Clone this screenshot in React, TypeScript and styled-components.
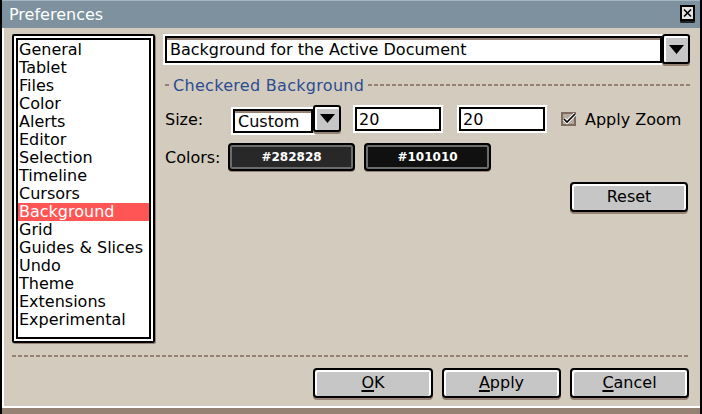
import React from 'react'
import styled, { createGlobalStyle, css } from 'styled-components'

const GlobalStyle = createGlobalStyle`
  html, body {
    margin: 0;
    padding: 0;
    background: #000;
  }
  body {
    font-family: 'DejaVu Sans', 'Liberation Sans', sans-serif;
    font-size: 16px;
    color: #000;
  }
`

const face = '#d3cbbe'
const shade = '#968275'

const Window = styled.div`
  width: 702px;
  height: 414px;
  box-sizing: border-box;
  display: flex;
  flex-direction: column;
  border-left: 2px solid #000;
  border-right: 2px solid #000;
  background: ${face};
  overflow: hidden;
`

const TitleBar = styled.div`
  height: 28px;
  flex: none;
  box-sizing: border-box;
  border-top: 1px solid #a4b6c0;
  background: #7d929e;
  display: flex;
  align-items: center;
  justify-content: space-between;
  padding: 0 5px 0 7px;
`

const Title = styled.span`
  color: #fff;
  line-height: 1;
  margin-top: 1px;
`

const Body = styled.div`
  flex: 1;
  display: flex;
  flex-direction: column;
  box-sizing: border-box;
  border-left: 2px solid #fff;
  padding: 6px 10px 0 8px;
`

const Main = styled.div`
  display: flex;
  align-items: flex-start;
  height: 309px;
`

const ListBox = styled.div`
  width: 143px;
  height: 309px;
  box-sizing: border-box;
  background: #fff;
  border: 2px solid #000;
  border-radius: 2px;
  box-shadow: inset 0 0 0 2px #fff, inset 0 0 0 4px #000, 1px 1px 0 ${shade};
  padding: 5px 4px 4px 4px;
  display: flex;
  flex-direction: column;
`

const ListItem = styled.div<{ $selected?: boolean }>`
  height: 18px;
  line-height: 18px;
  padding-left: 1px;
  white-space: nowrap;
  ${(p) =>
    p.$selected &&
    css`
      background: #ff5555;
      color: #fff;
    `}
`

const Panel = styled.div`
  flex: 1;
  margin-left: 10px;
  display: flex;
  flex-direction: column;
`

const Combo = styled.div`
  display: flex;
  align-items: flex-start;
`

const Field = styled.div<{ $width?: number; $height: number; $top: number }>`
  box-sizing: border-box;
  ${(p) => (p.$width ? `width: ${p.$width}px;` : 'flex: 1;')}
  height: ${(p) => p.$height}px;
  margin-top: ${(p) => p.$top}px;
  background: #fff;
  border: 2px solid #000;
  box-shadow: 0 0 0 2px #fff, inset 0 2px 0 ${shade};
  padding: 0 3px;
  display: flex;
  align-items: center;
  white-space: nowrap;
`

const DropBtn = styled.div<{ $height: number }>`
  box-sizing: border-box;
  width: 28px;
  height: ${(p) => p.$height}px;
  background: #c6c6c6;
  border: 2px solid #000;
  border-radius: 3px;
  box-shadow: inset 2px 2px 0 #fff, 0 2px 0 ${shade};
  display: flex;
  align-items: center;
  justify-content: center;
`

const SectionHeader = styled.div`
  display: flex;
  align-items: center;
  margin-top: 13px;
  height: 16px;
`

const Dash = styled.div<{ $grow?: boolean }>`
  height: 2px;
  ${(p) => (p.$grow ? 'flex: 1;' : 'width: 4px;')}
  background: repeating-linear-gradient(90deg, ${shade} 0 4px, transparent 4px 6px);
`

const HeaderText = styled.span`
  color: #2c4c91;
  margin: 0 4px;
  letter-spacing: 0.3px;
`

const Row = styled.div<{ $top: number }>`
  display: flex;
  align-items: center;
  margin-top: ${(p) => p.$top}px;
`

const Label = styled.span<{ $width: number }>`
  width: ${(p) => p.$width}px;
  flex: none;
`

const Entry = styled.div<{ $gap: number }>`
  box-sizing: border-box;
  width: 86px;
  height: 24px;
  margin-left: ${(p) => p.$gap}px;
  background: #fff;
  border: 2px solid #000;
  box-shadow: 0 0 0 2px #fff;
  padding: 0 2px;
  display: flex;
  align-items: center;
`

const CheckBox = styled.span`
  display: flex;
  margin-left: 16px;
`

const CheckLabel = styled.span`
  margin-left: 8px;
`

const ColorButton = styled.div<{ $color: string; $gap?: number }>`
  box-sizing: border-box;
  width: 127px;
  height: 28px;
  margin-left: ${(p) => p.$gap || 0}px;
  background: ${(p) => p.$color};
  border: 2px solid #000;
  border-radius: 4px;
  box-shadow: inset 0 0 0 2px #6c6c6c, 0 1px 0 ${shade};
  color: #fff;
  font-size: 12px;
  font-weight: bold;
  display: flex;
  align-items: center;
  justify-content: center;
`

const ResetRow = styled.div`
  display: flex;
  justify-content: flex-end;
  margin-top: 11px;
  padding-right: 2px;
`

const Button = styled.div<{ $width?: number }>`
  box-sizing: border-box;
  width: ${(p) => p.$width || 119}px;
  height: 30px;
  background: #c6c6c6;
  border: 2px solid #000;
  border-radius: 4px;
  box-shadow: inset 2px 2px 0 #fff, inset -2px 0 0 #fff, 0 2px 0 ${shade};
  display: flex;
  align-items: center;
  justify-content: center;
  padding-bottom: 1px;
`

const Mnemonic = styled.span`
  text-decoration: underline;
  text-underline-offset: 2px;
  text-decoration-thickness: 2px;
`

const Separator = styled.div`
  height: 2px;
  margin-top: 12px;
  background: repeating-linear-gradient(90deg, ${shade} 0 4px, transparent 4px 6px);
`

const Footer = styled.div`
  display: flex;
  justify-content: flex-end;
  gap: 9px;
  margin-top: 11px;
  padding-right: 1px;
`

const BottomEdge = styled.div`
  height: 8px;
  flex: none;
  box-sizing: border-box;
  border-top: 2px solid #fff;
  background: ${shade};
`

const DownArrow = () => (
  <svg width="15" height="9" viewBox="0 0 15 9">
    <polygon points="0,0 15,0 7.5,9" fill="#000" />
  </svg>
)

const CloseIcon = () => (
  <svg width="15" height="19" viewBox="0 0 15 19">
    <rect x="0" y="14" width="15" height="4" rx="1" fill="#222" />
    <rect x="1" y="1" width="13" height="14" fill="#e4e4e4" stroke="#000" strokeWidth="2" />
    <path d="M4 4.5 L11 11.5 M11 4.5 L4 11.5" stroke="#000" strokeWidth="1.6" />
  </svg>
)

const CheckIcon = () => (
  <svg width="16" height="14" viewBox="0 0 16 14">
    <rect x="1" y="1" width="13" height="12" fill="#b5aaa0" stroke="#7d6b60" strokeWidth="2" />
    <path d="M3 7 L6 10 L14 2" stroke="#fff" strokeWidth="3.5" fill="none" />
    <path d="M3 7 L6 10 L14 2" stroke="#000" strokeWidth="1.6" fill="none" />
  </svg>
)

const sections = [
  'General',
  'Tablet',
  'Files',
  'Color',
  'Alerts',
  'Editor',
  'Selection',
  'Timeline',
  'Cursors',
  'Background',
  'Grid',
  'Guides & Slices',
  'Undo',
  'Theme',
  'Extensions',
  'Experimental',
]

const buttons = [
  { key: 'O', rest: 'K' },
  { key: 'A', rest: 'pply' },
  { key: 'C', rest: 'ancel' },
]

const App = () => {
  return (
    <>
      <GlobalStyle />
      <Window>
        <TitleBar>
          <Title>Preferences</Title>
          <CloseIcon />
        </TitleBar>
        <Body>
          <Main>
            <ListBox>
              {sections.map((name) => (
                <ListItem key={name} $selected={name === 'Background'}>
                  {name}
                </ListItem>
              ))}
            </ListBox>
            <Panel>
              <Combo>
                <Field $height={27} $top={2}>
                  Background for the Active Document
                </Field>
                <DropBtn $height={30}>
                  <DownArrow />
                </DropBtn>
              </Combo>

              <SectionHeader>
                <Dash />
                <HeaderText>Checkered Background</HeaderText>
                <Dash $grow />
              </SectionHeader>

              <Row $top={12}>
                <Label $width={68}>Size:</Label>
                <Combo>
                  <Field $width={80} $height={24} $top={4}>
                    Custom
                  </Field>
                  <DropBtn $height={27}>
                    <DownArrow />
                  </DropBtn>
                </Combo>
                <Entry $gap={14}>20</Entry>
                <Entry $gap={18}>20</Entry>
                <CheckBox>
                  <CheckIcon />
                </CheckBox>
                <CheckLabel>Apply Zoom</CheckLabel>
              </Row>

              <Row $top={10}>
                <Label $width={63}>Colors:</Label>
                <ColorButton $color="#282828">#282828</ColorButton>
                <ColorButton $color="#101010" $gap={9}>
                  #101010
                </ColorButton>
              </Row>

              <ResetRow>
                <Button $width={118}>Reset</Button>
              </ResetRow>
            </Panel>
          </Main>

          <Separator />

          <Footer>
            {buttons.map((b) => (
              <Button key={b.key} $width={b.key === 'O' ? 120 : 119}>
                <Mnemonic>{b.key}</Mnemonic>
                {b.rest}
              </Button>
            ))}
          </Footer>
        </Body>
        <BottomEdge />
      </Window>
    </>
  )
}

export default App
